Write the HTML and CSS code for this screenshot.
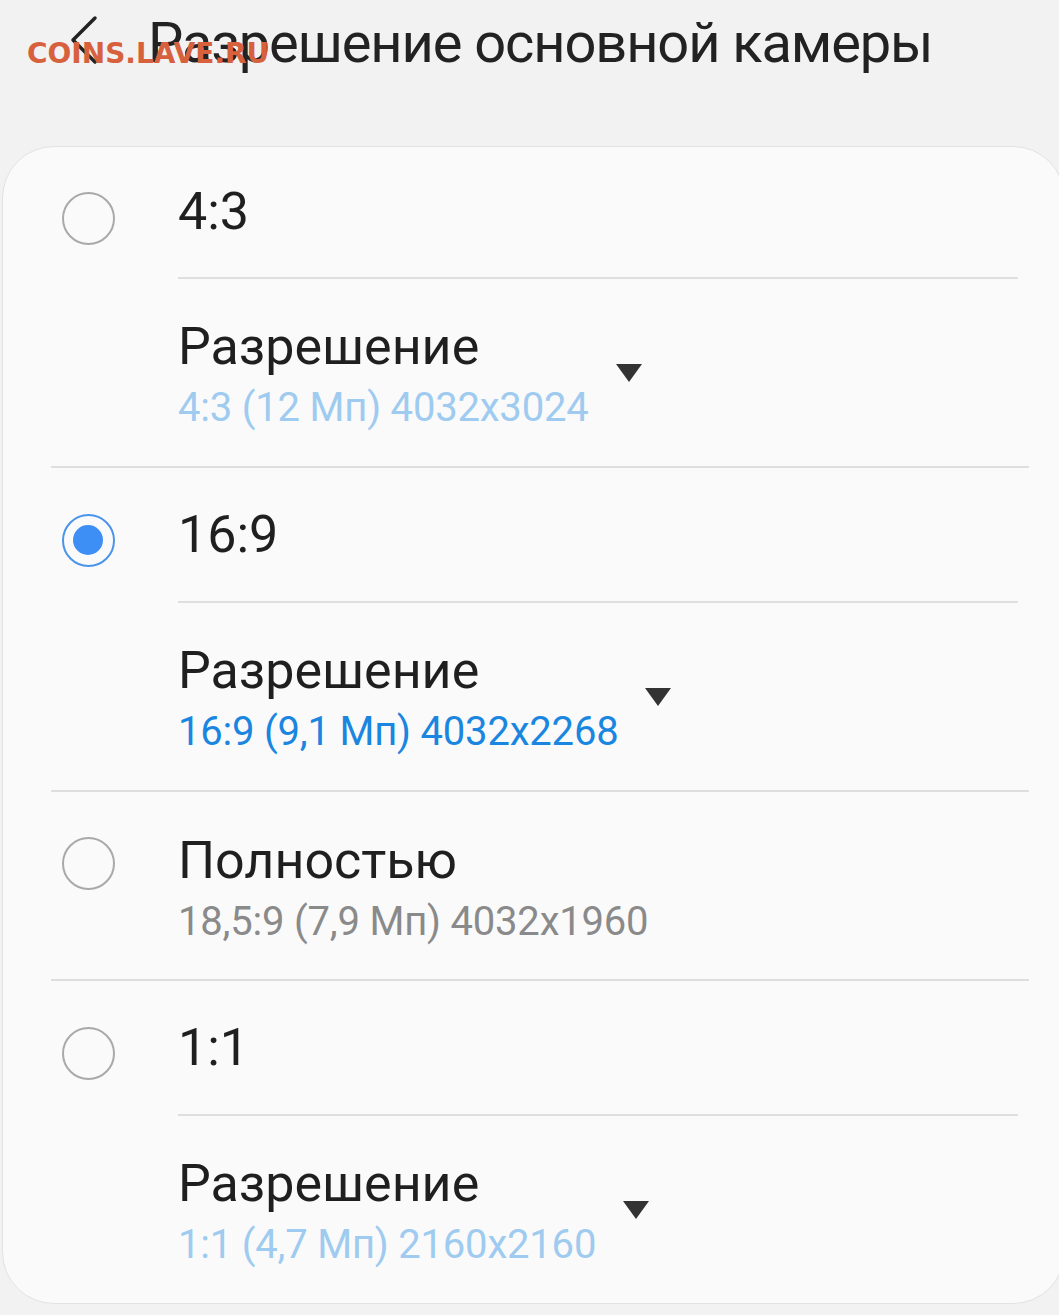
FILE: index.html
```html
<!DOCTYPE html>
<html lang="ru">
<head>
    <meta charset="UTF-8">
    <meta name="viewport" content="width=device-width, initial-scale=1.0">
    <title>Разрешение основной камеры</title>
    <link rel="stylesheet" href="styles.css">
</head>
<body>

    <header class="top-bar">
        <svg class="back-icon" width="34" height="52" viewBox="0 0 34 52">
            <polyline points="28,4 6,26 28,48" fill="none" stroke="#222" stroke-width="3.5" stroke-linecap="round" stroke-linejoin="round"/>
        </svg>
        <h1 class="page-title">Разрешение основной камеры</h1>
        <div class="watermark">COINS.LAVE.RU</div>
    </header>

    <div class="card">
        <!-- 4:3 -->
        <div class="row head first">
            <div class="radio-cell"><span class="radio"></span></div>
            <div class="title">4:3</div>
        </div>
        <div class="rule inset"></div>
        <div class="row sub">
            <div class="radio-cell"></div>
            <div class="text-block">
                <div class="title">Разрешение</div>
                <div class="summary light">4:3 (12 Мп) 4032x3024</div>
            </div>
            <span class="dropdown"></span>
        </div>
        <div class="rule full"></div>

        <!-- 16:9 -->
        <div class="row head">
            <div class="radio-cell"><span class="radio checked"></span></div>
            <div class="title">16:9</div>
        </div>
        <div class="rule inset"></div>
        <div class="row sub">
            <div class="radio-cell"></div>
            <div class="text-block">
                <div class="title">Разрешение</div>
                <div class="summary active">16:9 (9,1 Мп) 4032x2268</div>
            </div>
            <span class="dropdown"></span>
        </div>
        <div class="rule full"></div>

        <!-- full screen -->
        <div class="row sub top">
            <div class="radio-cell"><span class="radio"></span></div>
            <div class="text-block">
                <div class="title">Полностью</div>
                <div class="summary muted">18,5:9 (7,9 Мп) 4032x1960</div>
            </div>
        </div>
        <div class="rule full"></div>

        <!-- 1:1 -->
        <div class="row head">
            <div class="radio-cell"><span class="radio"></span></div>
            <div class="title">1:1</div>
        </div>
        <div class="rule inset"></div>
        <div class="row sub">
            <div class="radio-cell"></div>
            <div class="text-block">
                <div class="title">Разрешение</div>
                <div class="summary light">1:1 (4,7 Мп) 2160x2160</div>
            </div>
            <span class="dropdown"></span>
        </div>
    </div>

</body>
</html>
```

FILE: styles.css
```css
body {
    margin: 0;
    background-color: #f2f2f2;
    font-family: Roboto, "Noto Sans", sans-serif;
    color: #1f1f1f;
    overflow: hidden;
}

.top-bar {
    position: relative;
    display: flex;
    align-items: flex-start;
    height: 146px;
}

.back-icon {
    margin: 14px 0 0 67px;
}

.page-title {
    margin: 3px 0 0 47px;
    font-size: 56px;
    font-weight: 400;
    line-height: 80px;
    letter-spacing: -1.1px;
    color: #222;
}

/* site watermark sits over the header */
.watermark {
    position: absolute;
    left: 27px;
    top: 40px;
    font-family: "DejaVu Sans", sans-serif;
    font-weight: bold;
    font-size: 28px;
    line-height: 28px;
    color: #d8613d;
}

.card {
    width: 1061px;
    margin-left: 2px;
    background-color: #fafafa;
    border: 1px solid #e2e2e2;
    border-radius: 52px;
}

.row {
    display: flex;
    align-items: center;
}

.row.head {
    height: 133px;
}

.row.head.first {
    height: 130px;
}

.row.sub {
    height: 187px;
}

.row.sub.top {
    align-items: flex-start;
    padding-top: 38px;
    height: 149px;
}

.radio-cell {
    width: 175px;
    flex-shrink: 0;
    display: flex;
    padding-left: 59px;
    box-sizing: border-box;
}

.radio {
    display: block;
    position: relative;
    box-sizing: border-box;
    width: 53px;
    height: 53px;
    border: 2.5px solid #a9a9a9;
    border-radius: 50%;
}

.row.head .radio {
    margin-top: 12px;
}

.row.sub.top .radio {
    margin-top: 7px;
}

.radio.checked {
    border-color: #4a94ea;
}

.radio.checked::after {
    content: "";
    position: absolute;
    left: 9px;
    top: 9px;
    width: 30px;
    height: 30px;
    border-radius: 50%;
    background-color: #3d8ef5;
}

.title {
    font-size: 52px;
    line-height: 62px;
    color: #1f1f1f;
}

.text-block {
    padding-top: 9px;
}

.row.sub.top .text-block {
    padding-top: 0;
}

.summary {
    font-size: 40px;
    line-height: 60px;
    letter-spacing: -0.2px;
}

.summary.light {
    color: #9ecbef;
}

.summary.active {
    color: #1a86e0;
}

.summary.muted {
    color: #8a8a8a;
}

.dropdown {
    width: 0;
    height: 0;
    margin-left: 27px;
    border-left: 13px solid transparent;
    border-right: 13px solid transparent;
    border-top: 18px solid #333;
}

.rule {
    height: 2px;
    background-color: #dedede;
}

.rule.inset {
    margin-left: 175px;
    margin-right: 46px;
}

.rule.full {
    margin-left: 48px;
    margin-right: 35px;
}
```
